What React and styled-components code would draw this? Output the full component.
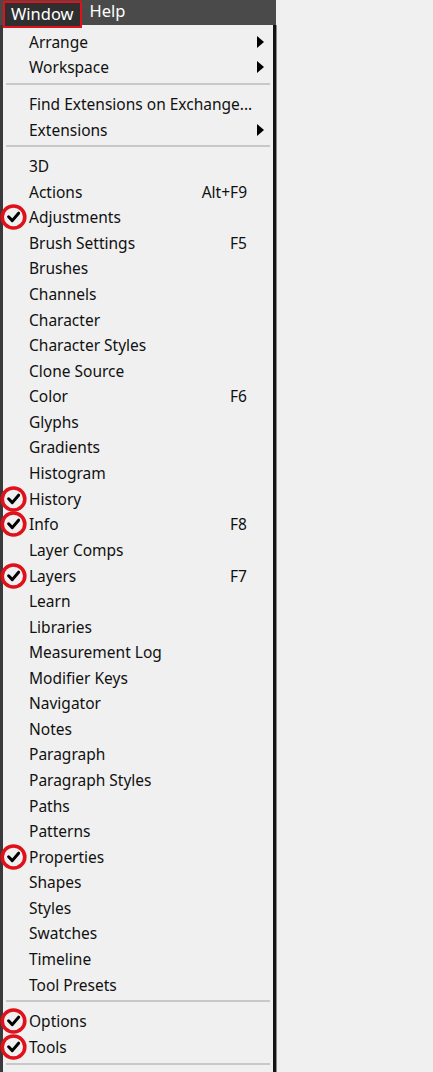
import styled, { createGlobalStyle } from 'styled-components'

const GlobalStyle = createGlobalStyle`
  html, body {
    margin: 0;
    padding: 0;
    background: #f0f0f0;
  }
  body {
    font-family: "Noto Sans", "Open Sans", Arial, sans-serif;
  }
`

const Page = styled.div`
  display: flex;
  width: 433px;
  height: 1072px;
  overflow: hidden;
  background: #f0f0f0;
`

const Column = styled.div`
  display: flex;
  flex-direction: column;
  width: 276px;
`

const MenuBar = styled.div`
  display: flex;
  align-items: flex-start;
  height: 25px;
  background: #4a4a4a;
  padding-left: 3px;
  position: relative;
  z-index: 2;
`

const MenuTitle = styled.div`
  height: ${(p) => (p.$active ? '23px' : '25px')};
  margin-top: ${(p) => (p.$active ? '1px' : '0')};
  padding: 0 ${(p) => (p.$active ? '6px' : '8px')};
  line-height: 22px;
  font-size: 16.5px;
  color: #fff;
  background: ${(p) => (p.$active ? '#2f2f2f' : 'transparent')};
  border: ${(p) => (p.$active ? '2px solid #e0111b' : 'none')};
`

const Panel = styled.div`
  flex: 1;
  display: flex;
  flex-direction: column;
  padding-top: 4px;
  background: #f0f0f0;
  border-left: 3px solid #3a3a3a;
  border-right: 3px solid #141414;
  box-shadow: 1px 0 0 #8a8a8a;
`

const Row = styled.div`
  display: grid;
  grid-template-columns: 26px 1fr auto 26px;
  align-items: center;
  height: 25.58px;
  font-size: 15.5px;
  color: #111;
`

const CheckCell = styled.div`
  display: flex;
  align-items: center;
  height: 100%;
  margin-left: -3px;
`

const Label = styled.span`
  white-space: nowrap;
`

const Shortcut = styled.span`
  text-align: right;
  white-space: nowrap;
`

const ArrowCell = styled.div`
  display: flex;
  align-items: center;
  padding-left: 10px;
`

const Arrow = styled.span`
  width: 0;
  height: 0;
  border-left: 7px solid #000;
  border-top: 6px solid transparent;
  border-bottom: 6px solid transparent;
`

const Separator = styled.div`
  height: 2px;
  margin: 3px 3px 6px 3px;
  background: #c8c8c8;
`

const CheckMark = () => (
  <svg width="29" height="26" viewBox="0 0 29 26">
    <ellipse cx="13.5" cy="13" rx="11.3" ry="11" fill="none" stroke="#e0111b" strokeWidth="3.6" />
    <path d="M8.6 12.8 L12.3 16.6 L18.6 9.2" fill="none" stroke="#000" strokeWidth="3" strokeLinecap="round" strokeLinejoin="round" />
  </svg>
)

const groups = [
  [
    { label: 'Arrange', sub: true },
    { label: 'Workspace', sub: true },
  ],
  [
    { label: 'Find Extensions on Exchange...' },
    { label: 'Extensions', sub: true },
  ],
  [
    { label: '3D' },
    { label: 'Actions', key: 'Alt+F9' },
    { label: 'Adjustments', checked: true },
    { label: 'Brush Settings', key: 'F5' },
    { label: 'Brushes' },
    { label: 'Channels' },
    { label: 'Character' },
    { label: 'Character Styles' },
    { label: 'Clone Source' },
    { label: 'Color', key: 'F6' },
    { label: 'Glyphs' },
    { label: 'Gradients' },
    { label: 'Histogram' },
    { label: 'History', checked: true },
    { label: 'Info', key: 'F8', checked: true },
    { label: 'Layer Comps' },
    { label: 'Layers', key: 'F7', checked: true },
    { label: 'Learn' },
    { label: 'Libraries' },
    { label: 'Measurement Log' },
    { label: 'Modifier Keys' },
    { label: 'Navigator' },
    { label: 'Notes' },
    { label: 'Paragraph' },
    { label: 'Paragraph Styles' },
    { label: 'Paths' },
    { label: 'Patterns' },
    { label: 'Properties', checked: true },
    { label: 'Shapes' },
    { label: 'Styles' },
    { label: 'Swatches' },
    { label: 'Timeline' },
    { label: 'Tool Presets' },
  ],
  [
    { label: 'Options', checked: true },
    { label: 'Tools', checked: true },
  ],
]

export default function App() {
  return (
    <>
      <GlobalStyle />
      <Page>
        <Column>
          <MenuBar>
            <MenuTitle $active>Window</MenuTitle>
            <MenuTitle>Help</MenuTitle>
          </MenuBar>
          <Panel>
            {groups.map((items, gi) => (
              <div key={gi}>
                {items.map((item) => (
                  <Row key={item.label}>
                    <CheckCell>{item.checked && <CheckMark />}</CheckCell>
                    <Label>{item.label}</Label>
                    <Shortcut>{item.key}</Shortcut>
                    <ArrowCell>{item.sub && <Arrow />}</ArrowCell>
                  </Row>
                ))}
                <Separator />
              </div>
            ))}
          </Panel>
        </Column>
      </Page>
    </>
  )
}
